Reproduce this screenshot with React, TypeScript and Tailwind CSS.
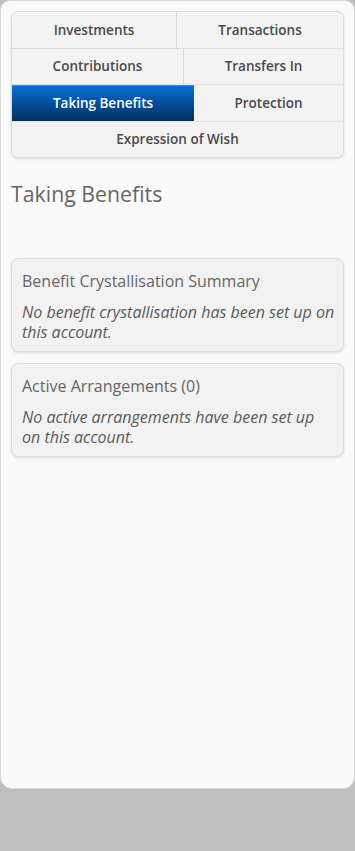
import React from "react";

const Tab = ({ label, active, className = "" }: { label: string; active?: boolean; className?: string }) => (
  <div
    className={
      "flex h-[35.5px] items-center justify-center text-[13.5px] font-semibold " +
      (active
        ? "bg-gradient-to-b from-[#0a6fd8] to-[#01305f] text-white border-t border-[#3a8de0] "
        : "text-[#4a4a4a] bg-[#f3f3f3] ") +
      className
    }
  >
    {label}
  </div>
);

export default function App() {
  return (
    <div className="min-h-[851px] w-[355px] bg-[#bfbfbf]" style={{ fontFamily: '"Open Sans", "Liberation Sans", sans-serif' }}>
      <div className="h-[789px] rounded-b-[12px] rounded-t-[10px] border border-[#d9d9d9] bg-[#fafafa] px-[10px] pt-[10px]">
        <div className="overflow-hidden rounded-[7px] border border-[#dcdcdc] bg-[#f3f3f3] shadow-[0_1px_3px_rgba(0,0,0,0.12)]">
          <div className="flex border-b border-[#e2e2e2]">
            <Tab label="Investments" className="w-[165px] border-r border-[#dadada] shadow-[1px_0_2px_rgba(0,0,0,0.08)]" />
            <Tab label="Transactions" className="flex-1" />
          </div>
          <div className="flex border-b border-[#e2e2e2]">
            <Tab label="Contributions" className="w-[172px] border-r border-[#dadada] shadow-[1px_0_2px_rgba(0,0,0,0.08)]" />
            <Tab label="Transfers In" className="flex-1" />
          </div>
          <div className="flex border-b border-[#e2e2e2]">
            <Tab label="Taking Benefits" active className="w-[182px]" />
            <Tab label="Protection" className="flex-1" />
          </div>
          <div className="flex">
            <Tab label="Expression of Wish" className="flex-1" />
          </div>
        </div>

        <h1 className="mt-[19px] text-[21.3px] leading-[34px] text-[#666]">Taking Benefits</h1>

        <div className="mt-[47px] flex flex-col gap-[11px]">
          <div className="rounded-[8px] border border-[#dcdcdc] bg-[#f2f2f2] pl-[10px] pr-[8.5px] pb-[9px] pt-[10px] shadow-[0_1px_3px_rgba(0,0,0,0.12)]">
            <div className="text-[16px] leading-[24px] text-[#666]">Benefit Crystallisation Summary</div>
            <p className="mt-[9px] text-[16px] italic leading-[20px] text-[#5a5a5a]">
              No benefit crystallisation has been set up on this account.
            </p>
          </div>
          <div className="rounded-[8px] border border-[#dcdcdc] bg-[#f2f2f2] pl-[10px] pr-[8.5px] pb-[9px] pt-[10px] shadow-[0_1px_3px_rgba(0,0,0,0.12)]">
            <div className="text-[16px] leading-[24px] text-[#666]">Active Arrangements (0)</div>
            <p className="mt-[9px] text-[16px] italic leading-[20px] text-[#5a5a5a]">
              No active arrangements have been set up on this account.
            </p>
          </div>
        </div>
      </div>
    </div>
  );
}
